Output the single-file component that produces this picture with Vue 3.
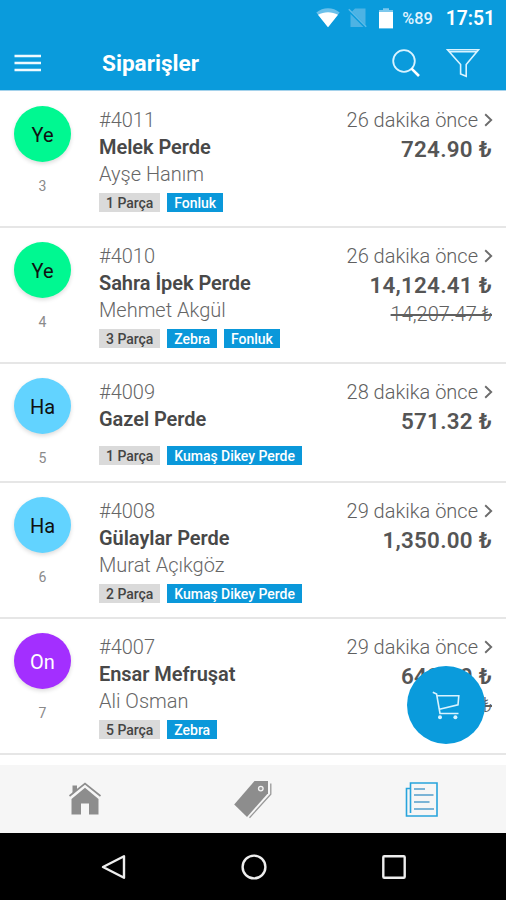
<script setup>
const orders = [
  { id: '#4011', no: 3, initials: 'Ye', tone: 'green', name: 'Melek Perde', contact: 'Ayşe Hanım', time: '26 dakika önce', price: '724.90 ₺', old: '', count: '1 Parça', tags: ['Fonluk'] },
  { id: '#4010', no: 4, initials: 'Ye', tone: 'green', name: 'Sahra İpek Perde', contact: 'Mehmet Akgül', time: '26 dakika önce', price: '14,124.41 ₺', old: '14,207.47 ₺', count: '3 Parça', tags: ['Zebra', 'Fonluk'] },
  { id: '#4009', no: 5, initials: 'Ha', tone: 'sky', name: 'Gazel Perde', contact: '', time: '28 dakika önce', price: '571.32 ₺', old: '', count: '1 Parça', tags: ['Kumaş Dikey Perde'] },
  { id: '#4008', no: 6, initials: 'Ha', tone: 'sky', name: 'Gülaylar Perde', contact: 'Murat Açıkgöz', time: '29 dakika önce', price: '1,350.00 ₺', old: '', count: '2 Parça', tags: ['Kumaş Dikey Perde'] },
  { id: '#4007', no: 7, initials: 'On', tone: 'purple', name: 'Ensar Mefruşat', contact: 'Ali Osman', time: '29 dakika önce', price: '640.00 ₺', old: '680.00 ₺', count: '5 Parça', tags: ['Zebra'] }
]
</script>

<template>
  <div class="screen">
    <header class="top">
      <div class="status">
        <svg class="wifi" width="24" height="20" viewBox="0 0 24 20">
          <path d="M0.3 4.6C7-1.1 17-1.1 23.7 4.6L12 19.2Z" fill="#6bc0ea" />
          <path d="M2 6.8C8 3.4 16 3.4 22 6.8L12 19.2Z" fill="#fff" />
        </svg>
        <svg class="sim" width="20" height="20" viewBox="0 0 20 20">
          <path d="M7 0.5H17.5V17L4 3.6Z M2.5 6L15.5 19H2.5Z" fill="#4db3e4" />
          <path d="M0.8 1.2L18.2 18.8" stroke="#5dbbe8" stroke-width="1.5" />
        </svg>
        <svg class="battery" width="16" height="21" viewBox="0 0 16 21">
          <path d="M5 0.3H11V2H15V6H1V2H5Z" fill="#7cc8ed" />
          <path d="M1 4H15V20.4H1Z" fill="#fff" />
        </svg>
        <span class="percent">%89</span>
        <span class="clock">17:51</span>
      </div>
      <div class="bar">
        <svg class="menu" width="28" height="20" viewBox="0 0 28 20">
          <path d="M0.5 3H27M0.5 10H27M0.5 17H27" stroke="#effaff" stroke-width="2.7" />
        </svg>
        <h1>Siparişler</h1>
        <svg class="search" width="30" height="30" viewBox="0 0 30 30" fill="none" stroke="#d9f3ff">
          <circle cx="13" cy="13" r="10.8" stroke-width="1.8" />
          <path d="M20.3 20.3L28 28" stroke-width="2.6" stroke="#fff" />
        </svg>
        <svg class="filter" width="34" height="30" viewBox="0 0 34 30" fill="none" stroke="#d9f3ff" stroke-width="1.6">
          <path d="M1.5 1.8H32.5L20.2 16.5V28.3L14.6 26V16.5L1.5 1.8Z M3 3.7H31" />
        </svg>
      </div>
    </header>

    <main class="list">
      <article v-for="o in orders" :key="o.id" class="order">
        <div class="side">
          <div class="avatar" :class="o.tone">{{ o.initials }}</div>
          <span class="no">{{ o.no }}</span>
        </div>
        <div class="info">
          <div class="id">{{ o.id }}</div>
          <div class="name">{{ o.name }}</div>
          <div class="contact">{{ o.contact }}</div>
          <div class="tags">
            <span class="tag count">{{ o.count }}</span>
            <span v-for="t in o.tags" :key="t" class="tag">{{ t }}</span>
          </div>
        </div>
        <div class="amounts">
          <div class="time">
            {{ o.time }}
            <svg width="9" height="16" viewBox="0 0 9 16"><path d="M1.2 1.2L7.2 7L1.2 12.8" fill="none" stroke="#6c6c6c" stroke-width="1.9" /></svg>
          </div>
          <div class="price">{{ o.price }}</div>
          <div v-if="o.old" class="old">{{ o.old }}</div>
        </div>
      </article>
      <button class="cart" aria-label="Sepet">
        <svg width="28" height="29" viewBox="0 0 28 29" fill="none" stroke="#d9f3ff" stroke-width="1.6">
          <path d="M0.8 1.2L4.6 3L8 22.5H26.5M4.8 4.8H26.8L26 13.8L7.5 18.3" />
          <circle cx="8" cy="26.3" r="2" fill="#d9f3ff" stroke="none" />
          <circle cx="23.4" cy="26.3" r="2" fill="#d9f3ff" stroke="none" />
        </svg>
      </button>
    </main>

    <nav class="tabs">
      <svg width="34" height="34" viewBox="0 0 34 34">
        <path d="M4.5 3.5H9V8L4.5 12Z M17 5.8L30.5 17V32.5H21V21.5H13V32.5H3.5V17Z" fill="#8d8d8d" />
        <path d="M1.5 14L17 1.5L32.5 14" fill="none" stroke="#8d8d8d" stroke-width="1.7" />
      </svg>
      <svg width="40" height="40" viewBox="0 0 40 40">
        <path d="M21.5 2H35V14.2L14 38L1.2 25.5Z" fill="#8d8d8d" />
        <path d="M37.8 4.5V15.2L16.5 38.8" fill="none" stroke="#999" stroke-width="1.3" />
        <circle cx="27.8" cy="9.6" r="2.3" fill="#999" stroke="#f3f3f3" stroke-width="1.3" />
      </svg>
      <svg width="34" height="37" viewBox="0 0 34 37" fill="none" stroke="#27a4dc">
        <path d="M5.5 32V2H32V35H1.5V7.5H5.5" stroke-width="1.6" />
        <path d="M9 8H20M9 14H28.5M9 21H24.5M9 28H29" stroke="#539fcb" stroke-width="1.5" />
      </svg>
    </nav>

    <footer class="system">
      <svg width="28" height="28" viewBox="0 0 28 28"><path d="M24 3.3V24.7L3 14Z" /></svg>
      <svg width="28" height="28" viewBox="0 0 28 28"><circle cx="14" cy="14" r="11.4" /></svg>
      <svg width="28" height="28" viewBox="0 0 28 28"><rect x="3.3" y="3.3" width="21.4" height="21.4" rx="1" /></svg>
    </footer>
  </div>
</template>

<style>
body { margin: 0; }
</style>

<style scoped>
.screen {
  width: 506px;
  height: 900px;
  display: flex;
  flex-direction: column;
  overflow: hidden;
  background: #fff;
  font-family: Roboto, "Liberation Sans", sans-serif;
}
.top {
  height: 91px;
  box-sizing: border-box;
  flex: none;
  background: #0a9bdc;
  border-bottom: 1px solid #a5d2eb;
  color: #fff;
}
.status {
  height: 36px;
  display: flex;
  align-items: center;
  justify-content: flex-end;
  padding-right: 11px;
}
.sim { margin-left: 8px; }
.battery { margin-left: 10px; }
.percent { margin-left: 8px; font-size: 16.3px; font-weight: 500; color: #e0f4ff; }
.clock { margin-left: 13px; font-size: 19.3px; font-weight: 600; }
.wifi, .sim, .battery { margin-right: 0; }
.wifi { margin-left: -1px; }
.bar {
  height: 54px;
  display: flex;
  align-items: center;
  padding: 0 26px 0 14px;
}
.search, .filter { margin-bottom: 1px; }
h1 {
  margin: 1px auto 0 60px;
  font-size: 22.6px;
  line-height: 30px;
  font-weight: 700;
}
.filter { margin-left: 25px; }
.list {
  position: relative;
  box-sizing: border-box;
  height: 674px;
  padding-top: 1px;
  flex: none;
  overflow: hidden;
}
.order {
  display: flex;
  align-items: flex-start;
  box-sizing: border-box;
  padding: 15px 13px 14px 14px;
  border-bottom: 2px solid #e6e6e6;
}
.side {
  width: 57px;
  height: 89px;
  display: flex;
  flex-direction: column;
  align-items: center;
  margin: -1px 28px 0 0;
}
.avatar {
  width: 57px;
  height: 56px;
  border-radius: 50%;
  font-size: 20px;
  line-height: 59px;
  text-align: center;
  color: #101010;
  box-shadow: 0 2px 4px rgba(0, 0, 0, 0.14);
}
.green { background: #00f891; }
.sky { background: #62d3ff; }
.purple { background: #a32fff; color: #fff; }
.no { margin-top: 15px; font-size: 14px; line-height: 18px; color: #8a8a8a; }
.info { flex: 1; }
.id, .name, .contact { font-size: 20px; line-height: 27px; white-space: nowrap; }
.id { color: #666; font-weight: 300; }
.name { color: #484848; font-weight: 600; letter-spacing: -0.05px; }
.contact { min-height: 8px; color: #666; font-weight: 300; }
.tags { display: flex; gap: 7px; margin-top: 5px; }
.tag {
  height: 19px;
  padding: 0 7px;
  background: #0a98da;
  color: #fff;
  font-size: 14px;
  line-height: 20px;
  font-weight: 500;
  letter-spacing: -0.03px;
  white-space: nowrap;
}
.count { background: #dadada; color: #444; }
.amounts { display: flex; flex-direction: column; align-items: flex-end; }
.time {
  display: flex;
  align-items: center;
  gap: 6px;
  font-size: 20px;
  line-height: 27px;
  font-weight: 300;
  color: #606060;
}
.price { margin-right: 1px; font-size: 22.4px; line-height: 31px; font-weight: 600; letter-spacing: 0.25px; color: #555; }
.old { margin-right: 1px; font-size: 20px; line-height: 26px; color: #606060; text-decoration: line-through; font-weight: 300; }
.cart {
  position: absolute;
  left: 407px;
  top: 575px;
  width: 78px;
  height: 78px;
  padding: 0;
  border: 0;
  border-radius: 50%;
  background: #0a9bdc;
  display: flex;
  align-items: center;
  justify-content: center;
}
.tabs {
  height: 68px;
  box-sizing: border-box;
  padding-left: 1px;
  flex: none;
  display: grid;
  grid-template-columns: repeat(3, 1fr);
  place-items: center;
  background: #f6f6f6;
}
.system {
  height: 67px;
  box-sizing: border-box;
  padding-left: 1px;
  flex: none;
  display: flex;
  justify-content: center;
  align-items: center;
  gap: 112px;
  background: #000;
}
.system svg { fill: none; stroke: #eee; stroke-width: 2.4; stroke-linejoin: round; }
</style>
